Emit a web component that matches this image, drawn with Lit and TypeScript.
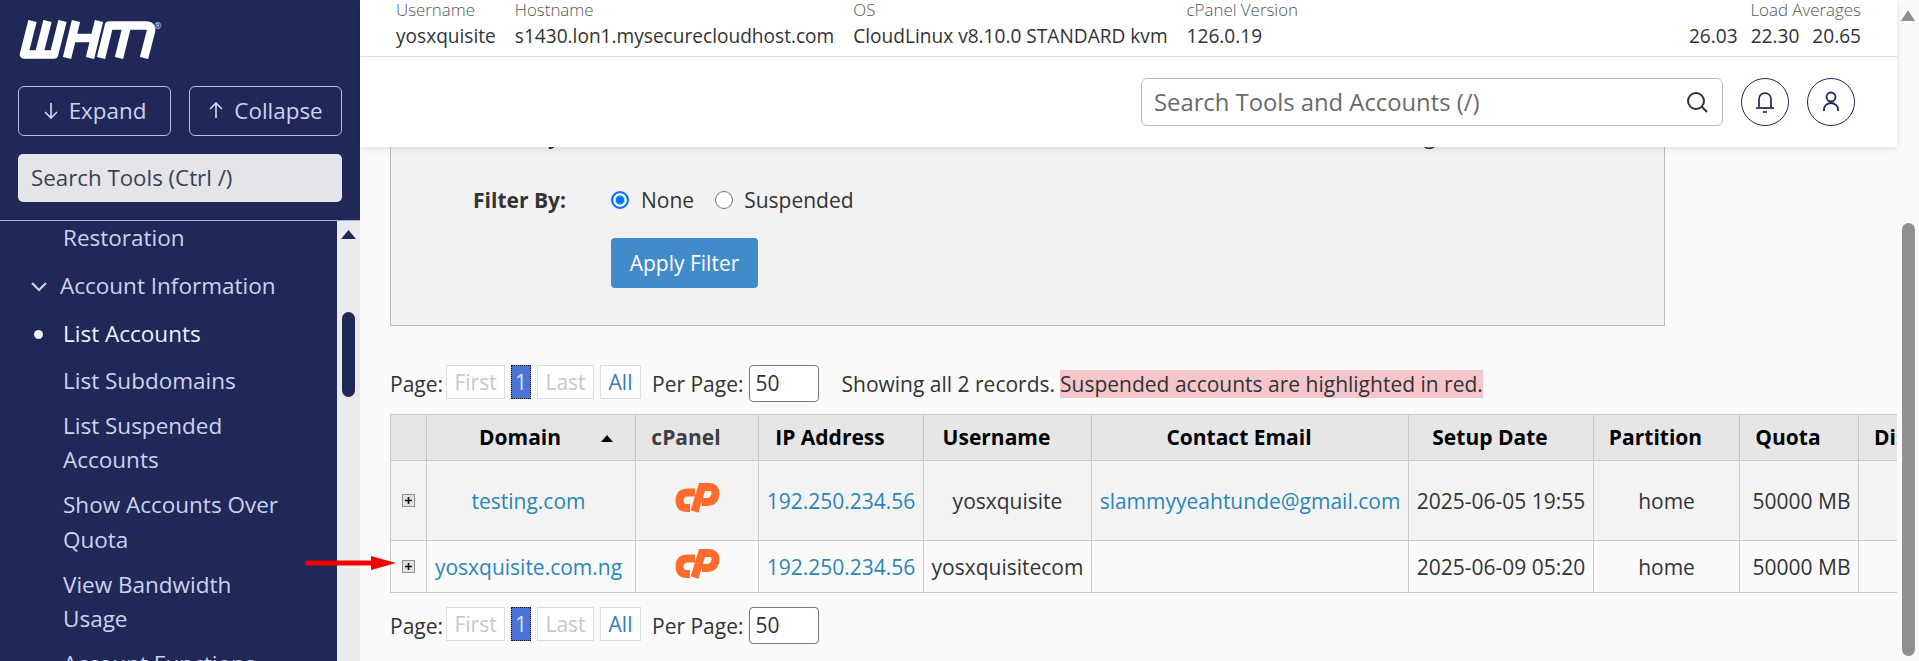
import { LitElement, html, css } from "lit";
import { customElement } from "lit/decorators.js";

const cpLogo = html`<svg class="cp" viewBox="0 0 45 31" width="45" height="31" fill="none" stroke="#ff6c2c" stroke-width="8">
  <path d="M20 10.5H13Q5 10.5 4.5 18Q4.5 26 12 26H15"/>
  <path d="M19.5 29.5L27 5H33.5Q41 5 40.5 12Q39.5 20 31 20H27"/>
</svg>`;

const expander = html`<svg class="exp" viewBox="0 0 13 13" width="13" height="13">
  <rect x=".5" y=".5" width="12" height="12" fill="#e2e2e2" stroke="#8e8e8e"/>
  <path d="M6.5 3v7M3 6.5h7" stroke="#111" stroke-width="1.6"/>
</svg>`;

const chevron = html`<svg width="16" height="10" viewBox="0 0 16 10" fill="none" stroke="#ccd3f1" stroke-width="2.2"><path d="M1 1l7 7 7-7"/></svg>`;

const pager = (cls: string, showing: boolean) => html`<div class="pager ${cls}">
  <span>Page:</span>
  <span class="pg off first">First</span>
  <span class="pg cur">1</span>
  <span class="pg off last">Last</span>
  <span class="pg all">All</span>
  <span class="perlabel">Per Page:</span>
  <span class="perinput">50</span>
  ${showing ? html`<span class="showing">Showing all 2 records.</span><span class="red">Suspended accounts are highlighted in red.</span>` : ""}
</div>`;

@customElement("app-root")
export class AppRoot extends LitElement {
  static styles = css`
    :host { display: flex; width: 100vw; height: 661px; overflow: hidden; font-family: "Open Sans", "Liberation Sans", sans-serif; background: #fafafa; color: #333; }
    * { box-sizing: border-box; }
    .side { width: 360px; flex: none; background: #1f2857; display: flex; flex-direction: column; color: #ccd3f1; }
    .side-top { height: 221px; flex: none; padding: 20px 18px 0; border-bottom: 1px solid #aab3e0; }
    .logo { display: block; }
    .btns { display: flex; justify-content: space-between; margin-top: 27px; }
    .btn { width: 153px; height: 50px; padding-bottom: 2px; border: 1px solid #b6bfe8; border-radius: 6px; display: flex; align-items: center; justify-content: center; gap: 10px; font-size: 22.4px; color: #ccd3f1; }
    .side-search { margin-top: 18px; height: 48px; padding: 0 0 2px 13px; border-radius: 5px; background: #e3e5e8; color: #3b4150; font-size: 22.3px; display: flex; align-items: center; }
    .side-body { flex: 1; display: flex; min-height: 0; overflow: hidden; }
    .menu { flex: 1; display: flex; flex-direction: column; gap: 10.5px; font-size: 22.5px; line-height: 34.5px; overflow: hidden; }
    .it { padding-left: 63px; width: 285px; flex: none; position: relative; }
    .it.rest { margin-bottom: 2.5px; }
    .it.head { padding-left: 60px; margin-bottom: 3px; display: flex; align-items: center; }
    .it.head svg { position: absolute; left: 31px; top: 13px; }
    .it.act { color: #eef0fb; margin-bottom: 2px; }
    .it.act::before { content: ""; position: absolute; left: 34px; top: 13px; width: 9px; height: 9px; border-radius: 50%; background: #eef0fb; }
    .sbar { width: 23px; flex: none; background: #e9eaec; display: flex; flex-direction: column; align-items: center; }
    .sbar svg { margin-top: 9px; }
    .sbar i { display: block; width: 13px; height: 85px; margin-top: 73px; border-radius: 7px; background: #1f2857; }

    .main { flex: 1; min-width: 0; display: flex; flex-direction: column; }
    .top { height: 147px; flex: none; background: #fff; position: relative; z-index: 2; box-shadow: 0 2px 6px rgba(0,0,0,.1); }
    .stats { height: 57px; display: flex; gap: 19px; padding: 0 36px; border-bottom: 1px solid #dcdcdc; }
    .stat { display: flex; flex-direction: column; }
    .lbl { font-weight: 300; font-size: 16.9px; color: #555; line-height: 20px; }
    .val { color: #333; font-size: 19.1px; line-height: 28px; margin-top: 2px; white-space: nowrap; }
    .stat.load { margin-left: auto; align-items: flex-end; }
    .val.nums { display: flex; gap: 13px; }
    .tools { height: 90px; display: flex; align-items: flex-start; justify-content: flex-end; padding: 21px 42px 0 0; gap: 18px; }
    .search { width: 582px; height: 48px; border: 1px solid #bdbdbd; border-radius: 6px; display: flex; align-items: center; justify-content: space-between; padding: 0 13px 0 12px; font-size: 23.8px; color: #6a6a6a; }
    .circ { width: 48px; height: 48px; border-radius: 50%; border: 1px solid #1f2857; display: flex; align-items: center; justify-content: center; flex: none; }

    .content { flex: 1; min-height: 0; overflow: hidden; padding-left: 30px; font-size: 21px; }
    .filter { width: 1275px; height: 179px; background: #f2f2f2; border: 1px solid #bbb; border-top: 0; overflow: hidden; }
    .frow { display: grid; grid-template-columns: 175px 1fr; column-gap: 45px; align-items: center; }
    .frow.clip { margin-top: -24px; line-height: 27px; height: 27px; white-space: nowrap; }
    .frow.clip span { margin-left: 727px; }
    .frow.main-row { margin-top: 35.5px; height: 27px; }
    .flabel { font-weight: 700; text-align: right; color: #333; white-space: nowrap; }
    .radios { display: flex; align-items: center; }
    .radio { width: 18px; height: 18px; border-radius: 50%; border: 1px solid #767676; background: #fff; flex: none; margin-right: 11px; }
    .radio.on { border: 2px solid #0075ff; background: #0075ff; box-shadow: inset 0 0 0 2.5px #fff; margin-right: 12px; }
    .r2 { margin-left: 21px; }
    .apply { margin: 25.5px 0 0 220px; width: 147px; height: 50px; background: #428bca; border-radius: 4px; color: #fff; display: flex; align-items: center; justify-content: center; font-size: 21px; }

    .pager { display: flex; align-items: center; height: 37px; white-space: nowrap; }
    .pager.p1 { margin-top: 39px; }
    .pager.p2 { margin-top: 14px; }
    .pg { height: 34px; display: flex; align-items: center; justify-content: center; border: 1px solid #ddd; background: #fff; align-self: flex-start; }
    .off { color: #c8c8c8; }
    .first { width: 59px; margin-left: 3px; }
    .cur { width: 20px; margin-left: 6px; background: #4a74d6; color: #d8e4fb; border: 1px dotted #111; }
    .last { width: 57px; margin-left: 6px; }
    .all { width: 41px; margin-left: 6px; color: #3a7cb0; }
    .perlabel { margin-left: 11px; }
    .perinput { width: 70px; height: 37px; margin-left: 5px; border: 1px solid #777; border-radius: 4px; background: #fff; padding-left: 6px; line-height: 35px; color: #333; }
    .showing { margin-left: 23px; }
    .red { margin-left: 5px; background: #f6c6cc; line-height: 28px; }

    .tw { margin-top: 12px; }
    table { table-layout: fixed; border-collapse: collapse; width: 1624px; }
    th, td { border: 1px solid #c9c9c9; padding: 0; text-align: center; white-space: nowrap; overflow: hidden; }
    th { background: #e6e6e6; height: 46px; font-weight: 700; color: #000; position: relative; padding: 0 22px 2px 0; }
    th.cpn { color: #3e3e3e; }
    th.dom svg { position: absolute; right: 22px; top: 20px; }
    tr.r1 td { background: #f3f3f3; height: 80px; }
    tr.r2 td { background: #fafafa; height: 52px; }
    td a { color: #2a86b9; }
    td.x svg { display: block; margin: auto; }
    td.c svg { display: block; margin: -7px auto 0; }
    td.dm { padding-right: 5px; }
    td.qt { padding-left: 5px; }

    .pscroll { width: 22px; flex: none; display: flex; flex-direction: column; align-items: center; background: #fafafa; }
    .pscroll svg { margin-top: 10px; }
    .pscroll i { display: block; width: 13px; height: 433px; margin-top: 202px; border-radius: 7px; background: #8f8f8f; }
    .arrow { position: absolute; left: 305px; top: 555px; z-index: 5; }
  `;

  render() {
    return html`
      <aside class="side">
        <div class="side-top">
          <svg class="logo" width="146" height="39" viewBox="0 0 146 39" fill="none" stroke="#fff" stroke-width="8.5" stroke-linejoin="round">
            <path d="M14.5 1L6 34.500H36L44.500 1M29.500 1L21 34.500"/>
            <path d="M58 1L49 38M81 1L72 38M51 18H77" stroke-linejoin="miter"/>
            <path d="M83 38L91 5.500H128Q134 5.500 133 11L126 38M109 5.500L101 38"/>
            <text x="136" y="9" font-size="9" font-family="Open Sans" fill="#dfe3f5" stroke="none">®</text>
          </svg>
          <div class="btns">
            <div class="btn"><svg width="16" height="17" viewBox="0 0 16 17" fill="none" stroke="#ccd3f1" stroke-width="1.7"><path d="M8 1v15M2 10l6 6 6-6"/></svg>Expand</div>
            <div class="btn"><svg width="16" height="17" viewBox="0 0 16 17" fill="none" stroke="#ccd3f1" stroke-width="1.7"><path d="M8 16V1M2 7l6-6 6 6"/></svg>Collapse</div>
          </div>
          <div class="side-search">Search Tools (Ctrl /)</div>
        </div>
        <div class="side-body">
          <nav class="menu">
            <div class="it rest">Restoration</div>
            <div class="it head">${chevron}Account Information</div>
            <div class="it act">List Accounts</div>
            <div class="it">List Subdomains</div>
            <div class="it">List Suspended Accounts</div>
            <div class="it">Show Accounts Over Quota</div>
            <div class="it">View Bandwidth Usage</div>
            <div class="it">Account Functions</div>
          </nav>
          <div class="sbar">
            <svg width="15" height="9" viewBox="0 0 15 9"><path d="M7.5 0L15 9H0z" fill="#1f2857"/></svg>
            <i></i>
          </div>
        </div>
      </aside>

      <div class="main">
        <header class="top">
          <div class="stats">
            <div class="stat"><span class="lbl">Username</span><span class="val">yosxquisite</span></div>
            <div class="stat"><span class="lbl">Hostname</span><span class="val">s1430.lon1.mysecurecloudhost.com</span></div>
            <div class="stat"><span class="lbl">OS</span><span class="val">CloudLinux v8.10.0 STANDARD kvm</span></div>
            <div class="stat"><span class="lbl">cPanel Version</span><span class="val">126.0.19</span></div>
            <div class="stat load"><span class="lbl">Load Averages</span><span class="val nums"><span>26.03</span><span>22.30</span><span>20.65</span></span></div>
          </div>
          <div class="tools">
            <div class="search">Search Tools and Accounts (/)
              <svg width="24" height="24" viewBox="0 0 24 24" fill="none" stroke="#333" stroke-width="2"><circle cx="11" cy="11" r="8"/><path d="M16.5 16.5L22 22"/></svg>
            </div>
            <div class="circ"><svg width="22" height="24" viewBox="0 0 22 24" fill="none" stroke="#1f2857" stroke-width="1.7"><path d="M5 17V9a6 6 0 0 1 12 0v8"/><path d="M2 18h18"/><path d="M9 22h4"/></svg></div>
            <div class="circ"><svg width="20" height="24" viewBox="0 0 20 24" fill="none" stroke="#1f2857" stroke-width="1.8"><circle cx="10" cy="7" r="4.5"/><path d="M3 21v-1.500a7 6.500 0 0 1 14 0V21"/></svg></div>
          </div>
        </header>
        <section class="content">
          <div class="filter">
            <div class="frow clip"><div class="flabel">Sort By:</div><span>(matching all)</span></div>
            <div class="frow main-row">
              <div class="flabel">Filter By:</div>
              <div class="radios"><span class="radio on"></span>None<span class="radio r2"></span>Suspended</div>
            </div>
            <div class="apply">Apply Filter</div>
          </div>
          ${pager("p1", true)}
          <div class="tw">
            <table>
              <colgroup><col style="width:36px"><col style="width:209px"><col style="width:123px"><col style="width:165px"><col style="width:168px"><col style="width:317px"><col style="width:185px"><col style="width:146px"><col style="width:119px"><col style="width:156px"></colgroup>
              <thead><tr>
                <th></th>
                <th class="dom">Domain<svg width="12" height="7" viewBox="0 0 12 7"><path d="M6 0l6 7H0z" fill="#000"/></svg></th>
                <th class="cpn">cPanel</th><th>IP Address</th><th>Username</th><th>Contact Email</th><th>Setup Date</th><th>Partition</th><th>Quota</th><th>Disk Used</th>
              </tr></thead>
              <tbody>
                <tr class="r1"><td class="x">${expander}</td><td class="dm"><a>testing.com</a></td><td class="c">${cpLogo}</td><td><a>192.250.234.56</a></td><td>yosxquisite</td><td><a>slammyyeahtunde@gmail.com</a></td><td>2025-06-05 19:55</td><td>home</td><td class="qt">50000 MB</td><td></td></tr>
                <tr class="r2"><td class="x">${expander}</td><td class="dm"><a>yosxquisite.com.ng</a></td><td class="c">${cpLogo}</td><td><a>192.250.234.56</a></td><td>yosxquisitecom</td><td></td><td>2025-06-09 05:20</td><td>home</td><td class="qt">50000 MB</td><td></td></tr>
              </tbody>
            </table>
          </div>
          ${pager("p2", false)}
        </section>
      </div>
      <div class="pscroll">
        <svg width="14" height="11" viewBox="0 0 14 11"><path d="M7 0l7 11H0z" fill="#8f8f8f"/></svg>
        <i></i>
      </div>
      <svg class="arrow" width="92" height="16" viewBox="0 0 92 16"><path d="M2.500 8H68" stroke="#f00000" stroke-width="5" stroke-linecap="round"/><path d="M66 1L91 8 66 15z" fill="#f00000"/></svg>
    `;
  }
}
